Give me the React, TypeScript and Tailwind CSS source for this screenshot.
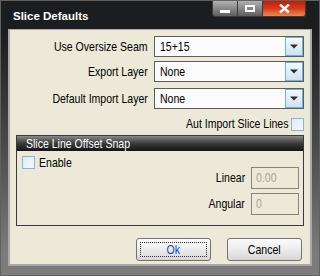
import * as React from "react";

const ui = "font-['Liberation_Sans',sans-serif] text-[13px] leading-[16px] text-black";

// the skin uses a tall narrow face, so squeeze Liberation Sans a bit
function T({ children, at = "left" }: { children: React.ReactNode; at?: "left" | "right" | "center" }) {
  const origin = at === "right" ? "origin-right" : at === "center" ? "origin-center" : "origin-left";
  return <span className={`inline-block scale-x-[0.81] whitespace-nowrap ${origin}`}>{children}</span>;
}

function Select({ value }: { value: string }) {
  return (
    <div className="flex h-[21px] w-[150px] border border-[#5c5c5c] bg-[#fbfbfb]">
      <div className="flex flex-1 items-center pl-[5px]">
        <T>{value}</T>
      </div>
      <div className="flex w-[18px] items-center justify-center border border-[#6fb2d8] bg-gradient-to-b from-[#f4f9fd] to-[#cde3f2]">
        <svg width="8" height="5" viewBox="0 0 8 5">
          <path d="M0 0.5h8L4 4.5z" fill="#2e2e2e" />
        </svg>
      </div>
    </div>
  );
}

function CheckBox() {
  return <div className="h-[13px] w-[13px] border border-[#86b7d8] bg-gradient-to-br from-[#dfe9f4] to-[#f6f9fc]" />;
}

function Field({ label, value }: { label: string; value: string }) {
  return (
    <div className="flex items-center justify-end gap-[6px]">
      <T at="right">{label}</T>
      <div className="flex h-[22px] w-[48px] items-center border border-[#858577] pl-[4px] text-[#a3a39a]">
        <T>{value}</T>
      </div>
    </div>
  );
}

function Button({ label, focused }: { label: string; focused?: boolean }) {
  return (
    <div className="h-[23px] w-[75px] rounded-[3px] border border-[#727272] bg-gradient-to-b from-[#fbfbfb] via-[#ececec] to-[#d6d6d6] p-[3px]">
      <div
        className={
          focused
            ? "flex h-full items-center justify-center border border-dotted border-[#333] text-[#1443d6]"
            : "flex h-full items-center justify-center"
        }
      >
        <T at="center">{label}</T>
      </div>
    </div>
  );
}

export default function App() {
  return (
    <div className="flex h-[276px] w-[320px] flex-col border border-[#606060] bg-gradient-to-b from-[#1c1d1e] from-[12%] to-[#7c7c7c] to-[92%]">
      {/* title bar */}
      <div className="flex h-[28px] items-start justify-between">
        <span className="pl-[12px] pt-[10px] font-['Liberation_Sans',sans-serif] text-[11.5px] font-bold leading-none text-white">
          Slice Defaults
        </span>
        <div className="mr-[13px] flex h-[16px] overflow-hidden rounded-b-[3px] border border-t-0 border-[#3a3a3a]">
          <div className="flex w-[24px] items-end justify-center bg-gradient-to-b from-[#b3b3b3] to-[#5e5e5e] pb-[3px]">
            <div className="h-[3px] w-[10px] bg-white" />
          </div>
          <div className="flex w-[25px] items-center justify-center border-l border-[#3a3a3a] bg-gradient-to-b from-[#b3b3b3] to-[#5e5e5e]">
            <div className="h-[7px] w-[10px] border-2 border-white" />
          </div>
          <div className="flex w-[43px] items-center justify-center border-l border-[#3a3a3a] bg-gradient-to-b from-[#c41a0c] via-[#d43a1a] to-[#e88a50]">
            <svg width="11" height="9" viewBox="0 0 11 9">
              <path d="M1 0.5L10 8.5M10 0.5L1 8.5" stroke="#fff" strokeWidth="2.4" />
            </svg>
          </div>
        </div>
      </div>

      {/* content panel */}
      <div className={`mx-[7px] mb-[9px] flex flex-1 flex-col border-2 border-t border-[#a9a9a9] bg-[#ece9d8] ${ui}`}>
        <div className="flex flex-col gap-[4px] pt-[6px]">
          <div className="flex items-center gap-[6px]">
            <div className="w-[138px] text-right">
              <T at="right">Use Oversize Seam</T>
            </div>
            <Select value="15+15" />
          </div>
          <div className="flex items-center gap-[6px]">
            <div className="w-[138px] text-right">
              <T at="right">Export Layer</T>
            </div>
            <Select value="None" />
          </div>
          <div className="mt-[2px] flex items-center gap-[6px]">
            <div className="w-[138px] text-right">
              <T at="right">Default Import Layer</T>
            </div>
            <Select value="None" />
          </div>
          <div className="mt-[3px] flex items-center justify-end gap-[3px] pr-[6px]">
            <T at="right">Aut Import Slice Lines</T>
            <CheckBox />
          </div>
        </div>

        {/* group box */}
        <div className="mx-[6px] mt-[3px] flex h-[91px] flex-col border border-[#3a3a3a]">
          <div className="flex h-[15px] items-center bg-gradient-to-b from-[#8a8a8a] via-[#3a3a3a] to-[#151515] pl-[9px] text-white">
            <T>Slice Line Offset Snap</T>
          </div>
          <div className="mt-[5px] flex h-[13px] items-center gap-[4px] pl-[5px]">
            <CheckBox />
            <T>Enable</T>
          </div>
          <div className="-mt-[2px] flex flex-col gap-[4px] pr-[4px]">
            <Field label="Linear" value="0.00" />
            <Field label="Angular" value="0" />
          </div>
        </div>

        <div className="mt-[12px] flex justify-end gap-[16px] pr-[8px]">
          <Button label="Ok" focused />
          <Button label="Cancel" />
        </div>
      </div>
    </div>
  );
}
